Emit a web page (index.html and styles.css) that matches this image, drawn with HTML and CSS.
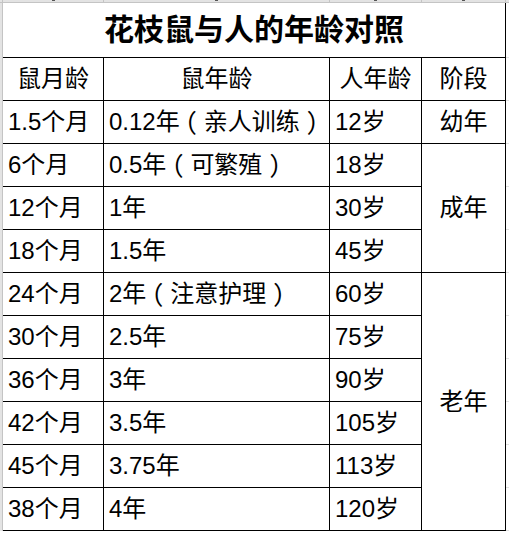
FILE: index.html
```html
<!DOCTYPE html>
<html lang="zh">
<head>
<meta charset="utf-8">
<title>花枝鼠与人的年龄对照</title>
<link rel="stylesheet" href="styles.css">
</head>
<body>
<div class="sheet">
  <div class="colbar">
    <div class="corner"></div>
    <div class="ch c1"><span class="mark"></span></div>
    <div class="ch c2"><span class="mark"></span></div>
    <div class="ch c3"><span class="mark"></span></div>
    <div class="ch c4"><span class="mark"></span></div>
    <div class="ch rest"></div>
  </div>
  <div class="main">
    <div class="rowbar"></div>
    <table class="age">
      <colgroup>
        <col class="w1"><col class="w2"><col class="w3"><col class="w4"><col class="w5">
      </colgroup>
      <tr class="title-row"><td colspan="4" class="title">花枝鼠与人的年龄对照</td><td class="x"></td></tr>
      <tr><td class="c">鼠月龄</td><td class="c">鼠年龄</td><td class="c">人年龄</td><td class="c">阶段</td><td class="x"></td></tr>
      <tr><td>1.5个月</td><td>0.12年<span class="p">（</span>亲人训练<span class="p">）</span></td><td>12岁</td><td class="c">幼年</td><td class="x"></td></tr>
      <tr><td>6个月</td><td>0.5年<span class="p">（</span>可繁殖<span class="p">）</span></td><td>18岁</td><td class="c" rowspan="3">成年</td><td class="x"></td></tr>
      <tr><td>12个月</td><td>1年</td><td>30岁</td><td class="x"></td></tr>
      <tr><td>18个月</td><td>1.5年</td><td>45岁</td><td class="x"></td></tr>
      <tr><td>24个月</td><td>2年<span class="p">（</span>注意护理<span class="p">）</span></td><td>60岁</td><td class="c" rowspan="6">老年</td><td class="x"></td></tr>
      <tr><td>30个月</td><td>2.5年</td><td>75岁</td><td class="x"></td></tr>
      <tr><td>36个月</td><td>3年</td><td>90岁</td><td class="x"></td></tr>
      <tr><td>42个月</td><td>3.5年</td><td>105岁</td><td class="x"></td></tr>
      <tr><td>45个月</td><td>3.75年</td><td>113岁</td><td class="x"></td></tr>
      <tr><td>38个月</td><td>4年</td><td>120岁</td><td class="x"></td></tr>
    </table>
  </div>
</div>
</body>
</html>
```
FILE: styles.css
```css
html, body {
  margin: 0;
  padding: 0;
  background: #ffffff;
}

body {
  font-family: "Liberation Sans", "Noto Sans CJK SC", sans-serif;
  color: #000;
}

.sheet {
  display: flex;
  flex-direction: column;
  width: 509px;
}

.colbar {
  display: flex;
  height: 2px;
  background: #e3e3e3;
  border-bottom: 1px solid #c4c4c4;
}

.corner {
  width: 2px;
  flex: none;
  border-right: 1px solid #c4c4c4;
}

.ch {
  display: flex;
  flex: none;
  justify-content: center;
  align-items: flex-start;
  border-right: 1px solid #c4c4c4;
}

.c1 { width: 100px; }
.c2 { width: 225px; }
.c3 { width: 91px; }
.c4 { width: 83px; }
.rest { flex: 1; border-right: none; }

.mark {
  width: 3px;
  height: 1px;
  background: #555;
}

.main {
  display: flex;
}

.rowbar {
  width: 2px;
  flex: none;
  background: #e3e3e3;
  border-right: 1px solid #c4c4c4;
}

.age {
  border-collapse: separate;
  border-spacing: 0;
  table-layout: fixed;
  width: 506px;
}

.w1 { width: 101px; }
.w2 { width: 226px; }
.w3 { width: 92px; }
.w4 { width: 84px; }
.w5 { width: 3px; }

.age td {
  box-sizing: border-box;
  border: 0;
  border-right: 1px solid #000;
  border-bottom: 1px solid #000;
  height: 43px;
  padding: 0 0 0 5px;
  font-size: 24px;
  line-height: 28px;
  white-space: nowrap;
  vertical-align: middle;
}

.age td.c {
  text-align: center;
  padding: 0;
}

.age td.title {
  height: 55px;
  text-align: center;
  padding: 0;
  font-size: 30px;
  font-weight: bold;
}

.age td.x {
  padding: 0;
  border-right: 0;
  border-bottom: 1px solid #e0e0e0;
}

.p {
  display: inline-block;
  width: 24px;
  text-align: center;
  font-feature-settings: "hwid";
}
```
